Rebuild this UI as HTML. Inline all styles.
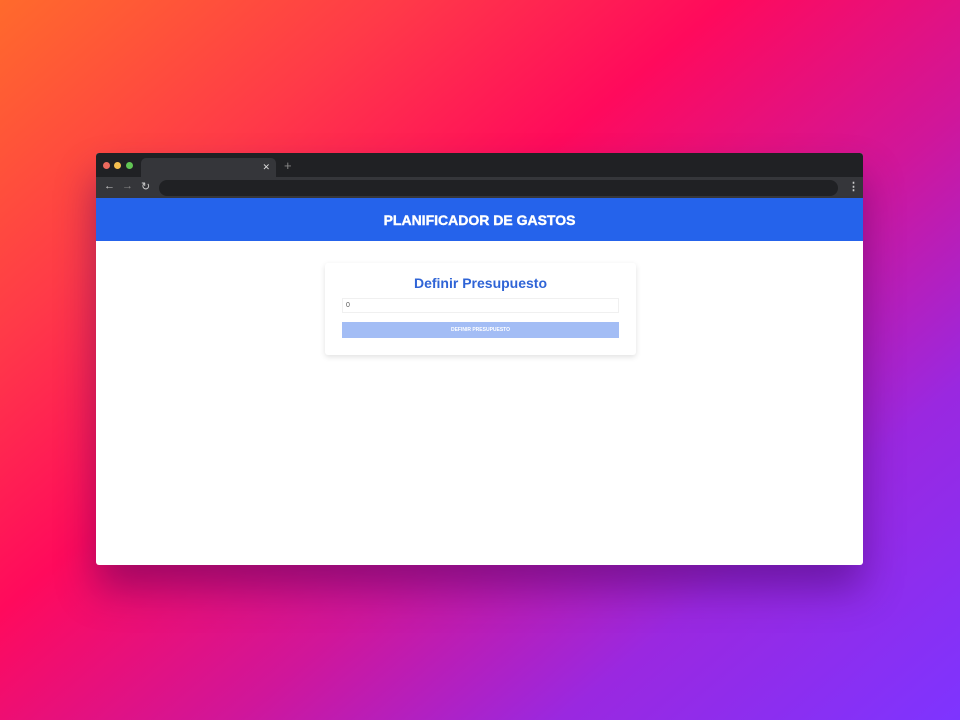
<!DOCTYPE html>
<html><head><style>
*{margin:0;padding:0;box-sizing:border-box}
body{width:960px;height:720px;overflow:hidden;position:relative;font-family:"Liberation Sans",sans-serif;
background:linear-gradient(140deg,#ff6a2c 0%,#ff3a48 22%,#ff0a5c 40%,#d0169a 60%,#9a28e0 78%,#7e34ff 100%);}
.win{position:absolute;left:96px;top:153px;width:767px;height:412px;background:#fff;border-radius:3px;overflow:hidden;box-shadow:0 24px 40px rgba(60,0,90,.45)}
.tabs{height:24px;background:#202124;position:relative}
.dot{position:absolute;top:9px;width:7px;height:7px;border-radius:50%}
.tab{position:absolute;left:45px;top:5px;width:135px;height:19px;background:#35363a;border-radius:5px 5px 0 0;color:#ddd;font-size:9px}
.toolbar{height:21px;background:#35363a;position:relative;color:#ccc;font-size:11px}
.url{position:absolute;left:63px;top:3px;width:679px;height:16px;border-radius:8px;background:#202124}
.hdr{height:43px;background:#2563eb;color:#fff;font-weight:900;font-size:14px;text-align:center;line-height:45px;letter-spacing:0;-webkit-text-stroke:.4px #fff}
.card{position:absolute;left:229px;top:110px;width:311px;height:92px;background:#fff;box-shadow:0 2px 6px rgba(0,0,0,.12);border-radius:3px}
.card h2{color:#2f64d6;font-size:14px;text-align:center;margin-top:12px;font-weight:bold}
.inp{position:absolute;left:17px;top:35px;width:277px;height:15px;border:1px solid #f0f0f0;font-size:7px;color:#555;padding-left:3px;line-height:14px}
.btn{position:absolute;left:17px;top:59px;width:277px;height:16px;background:#a3bdf5;color:#fff;font-size:5px;font-weight:bold;text-align:center;line-height:16px}
</style></head><body>
<div class="win">
 <div class="tabs">
  <div class="dot" style="left:7px;background:#ec6a5e"></div>
  <div class="dot" style="left:18px;background:#f4bf4f"></div>
  <div class="dot" style="left:30px;background:#61c554"></div>
  <div class="tab"><span style="position:absolute;right:6px;top:4px">✕</span></div>
  <span style="position:absolute;left:188px;top:5px;color:#888;font-size:13px">+</span>
 </div>
 <div class="toolbar">
  <span style="position:absolute;left:8px;top:3px">←</span>
  <span style="position:absolute;left:26px;top:3px;color:#888">→</span>
  <span style="position:absolute;left:45px;top:3px">↻</span>
  <div class="url"></div>
  <span style="position:absolute;left:752px;top:3px;font-weight:bold">⋮</span>
 </div>
 <div class="hdr">PLANIFICADOR DE GASTOS</div>
 <div class="card">
  <h2>Definir Presupuesto</h2>
  <div class="inp">0</div>
  <div class="btn">DEFINIR PRESUPUESTO</div>
 </div>
</div>
</body></html>
